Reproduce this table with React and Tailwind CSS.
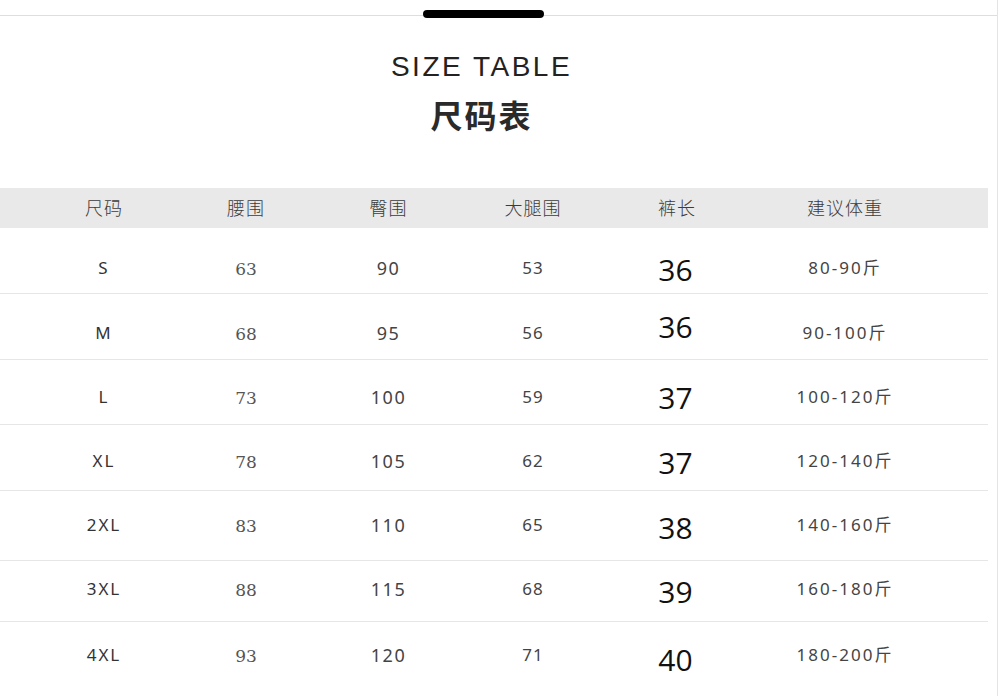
const rows = [
  { size: "S", waist: "63", hip: "90", thigh: "53", len: "36", weight: "80-90斤", h: "h-[66px]", pt: "pt-[28px]", lenMt: "mt-[-4px]" },
  { size: "M", waist: "68", hip: "95", thigh: "56", len: "36", weight: "90-100斤", h: "h-[66px]", pt: "pt-[27px]", lenMt: "mt-[-12px]" },
  { size: "L", waist: "73", hip: "100", thigh: "59", len: "37", weight: "100-120斤", h: "h-[65px]", pt: "pt-[25px]", lenMt: "mt-[-5px]" },
  { size: "XL", waist: "78", hip: "105", thigh: "62", len: "37", weight: "120-140斤", h: "h-[66px]", pt: "pt-[24px]", lenMt: "mt-[-4px]" },
  { size: "2XL", waist: "83", hip: "110", thigh: "65", len: "38", weight: "140-160斤", h: "h-[70px]", pt: "pt-[22px]", lenMt: "mt-[-3px]" },
  { size: "3XL", waist: "88", hip: "115", thigh: "68", len: "39", weight: "160-180斤", h: "h-[61px]", pt: "pt-[16px]", lenMt: "mt-[-3px]" },
  { size: "4XL", waist: "93", hip: "120", thigh: "71", len: "40", weight: "180-200斤", h: "h-[74px]", pt: "pt-[21px]", lenMt: "mt-[-1px]" },
];

const cols = "grid grid-cols-[142px_142px_143px_146px_142px_194px] pl-[33px]";
const sans = "font-['Noto_Sans','Noto_Sans_CJK_SC',sans-serif]";

export default function App() {
  return (
    <div className="w-[1000px] h-[696px] bg-white overflow-hidden">
      <div className="w-[998px] h-full border-r border-[#e4e4e4] flex flex-col">
        {/* top handle */}
        <div className="mt-[10px] h-[8px] flex items-center">
          <div className="w-[423px] h-px bg-[#dedede] mt-[2px]" />
          <div className="w-[121px] h-[8px] rounded-full bg-black" />
          <div className="flex-1 h-px bg-[#dedede] mt-[2px]" />
        </div>

        {/* title */}
        <div className="pr-[34px] flex flex-col items-center">
          <h2 className="mt-[35px] text-[28px] leading-none tracking-[2.5px] text-[#222] font-['Liberation_Sans',Arial,sans-serif]">
            SIZE TABLE
          </h2>
          <h1 className="mt-[17px] text-[32px] leading-none tracking-[2px] font-bold text-[#2a2a2a] font-['Noto_Sans_CJK_SC',sans-serif]">
            尺码表
          </h1>
        </div>

        {/* table */}
        <div className="mt-[58px] w-[988px]">
          <div className={`${cols} h-[40px] items-center bg-[#e9e9e9] text-[18px] tracking-[1px] text-[#3c3c3c] font-light ${sans}`}>
            {["尺码", "腰围", "臀围", "大腿围", "裤长", "建议体重"].map((t) => (
              <div key={t} className="text-center">{t}</div>
            ))}
          </div>

          {rows.map((r, i) => (
            <div
              key={r.size}
              className={`${cols} ${r.h} ${r.pt} items-start ${i < rows.length - 1 ? "border-b border-[#e6e6e6]" : ""}`}
            >
              <div className={`text-center leading-6 text-[17px] tracking-[2px] text-[#333] ${sans}`}>{r.size}</div>
              <div className="text-center leading-6 text-[17px] text-[#555] mt-[1px] font-['DejaVu_Serif',serif]">{r.waist}</div>
              <div className={`text-center leading-6 text-[18px] tracking-[1.5px] text-[#444] ${sans}`}>{r.hip}</div>
              <div className={`text-center leading-6 text-[17px] tracking-[1px] text-[#444] ${sans}`}>{r.thigh}</div>
              <div className={`text-center leading-[36px] text-[30px] font-medium pr-[3px] text-[#111] ${r.lenMt} font-['Open_Sans',sans-serif]`}>{r.len}</div>
              <div className={`text-center leading-6 text-[17px] tracking-[2px] text-[#444] ${sans}`}>{r.weight}</div>
            </div>
          ))}
        </div>
      </div>
    </div>
  );
}
